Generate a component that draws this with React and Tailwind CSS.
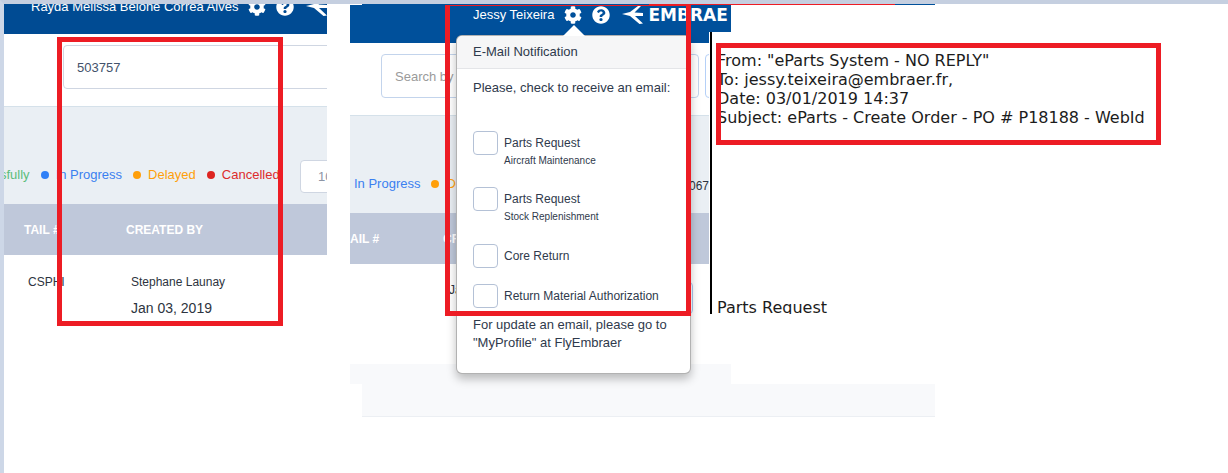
import { FaCog, FaQuestionCircle } from "react-icons/fa";

function Swoosh() {
  return (
    <svg viewBox="0 0 22 20" className="h-5 w-[22px] shrink-0" fill="currentColor" aria-hidden="true">
      <path d="M0 9 L8 7 L16 1 L19 1 L12.500 7.500 L21 8 L21 11 L13 11 L21 18.500 L17.500 19 L8 11Z" />
    </svg>
  );
}

function UserBar({ name }) {
  return (
    <div className="flex items-center text-[13px] leading-5 text-white">
      <span className="whitespace-nowrap">{name}</span>
      <button aria-label="Settings" className="ml-[10px] shrink-0"><FaCog size={18} /></button>
      <button aria-label="Help" className="ml-[10px] shrink-0"><FaQuestionCircle size={18} /></button>
      <span className="ml-3 flex items-center gap-1">
        <Swoosh />
        <span className="font-['DejaVu_Sans'] text-[17px] font-bold">EMBRAE</span>
      </span>
    </div>
  );
}

function Legend({ color, dot, children }) {
  return (
    <span className={`flex items-center gap-[7px] ${color}`}>
      {dot && <span className={`size-2 rounded-full ${dot}`} />}
      {children}
    </span>
  );
}

function OrdersPanel() {
  return (
    <section className="w-[323px] shrink-0 overflow-hidden">
      <header className="h-[30px] overflow-hidden bg-[#004b93] pl-[27px]">
        <div className="-mt-[7px]"><UserBar name="Rayda Melissa Belone Correa Alves" /></div>
      </header>
      <div className="h-[72px] pt-[11px] pl-[59px]">
        <input
          aria-label="Search"
          defaultValue="503757"
          className="h-11 w-[300px] rounded border border-[#cfd6e2] bg-white px-[13px] text-[13px] text-[#43526b]"
        />
      </div>
      <div className="flex h-[98px] items-start border-t border-[#d5e1ea] bg-[#eaeff4] pt-[53px] text-[13px]">
        <div className="-ml-1 flex h-[30px] w-[300px] shrink-0 items-center gap-[11px] whitespace-nowrap">
          <Legend color="text-[#5cbd7c]">sfully</Legend>
          <Legend color="text-[#3b7ff0]" dot="bg-[#2f80f7]">In Progress</Legend>
          <Legend color="text-[#ff9f0a]" dot="bg-[#ff9f0a]">Delayed</Legend>
          <Legend color="text-[#dd2c2c]" dot="bg-[#dd2420]">Cancelled</Legend>
        </div>
        <select aria-label="Page size" className="h-[33px] w-[60px] shrink-0 appearance-none rounded border border-[#cfd6e2] bg-white pl-[17px] text-[#8d95a5]">
          <option>10</option>
        </select>
      </div>
      <table className="w-full table-fixed text-left text-[#2d3440]">
        <thead className="h-[51px] bg-[#bfc8da] text-[12px] text-white">
          <tr><th className="w-[100px] pl-5">TAIL #</th><th className="pl-[22px]">CREATED BY</th></tr>
        </thead>
        <tbody className="align-top">
          <tr>
            <td className="pt-[17px] pl-6 text-[12px] leading-5">CSPHI</td>
            <td className="pt-[17px] pl-[27px]">
              <p className="text-[12px] leading-5">Stephane Launay</p>
              <p className="pt-[6px] text-[14px] leading-5">Jan 03, 2019</p>
            </td>
          </tr>
        </tbody>
      </table>
    </section>
  );
}

function CheckRow({ id, title, note }) {
  return (
    <div className="flex items-start gap-[6px]">
      <input
        id={id}
        type="checkbox"
        className="h-6 w-[25px] shrink-0 appearance-none rounded border border-[#b4c1d6] bg-white"
      />
      <label htmlFor={id} className="text-[12px] leading-6">
        {title}
        {note && <span className="block text-[10px] leading-3">{note}</span>}
      </label>
    </div>
  );
}

function NotificationPopover() {
  return (
    <div className="absolute top-[30px] left-[106px] z-20 h-[339px] w-[235px] rounded-md border border-black/30 bg-white text-[13px] text-[#2f3a4c] shadow-[0_5px_10px_rgba(0,0,0,0.25)]">
      <svg viewBox="0 0 22 11" className="absolute -top-[11px] left-[106px] h-[11px] w-[22px]" aria-hidden="true">
        <path d="M11 0 22 11H0Z" fill="#fff" />
      </svg>
      <h2 className="rounded-t-md border-b border-[#e4e5e8] bg-[#f6f6f7] py-[6px] pl-4 leading-5">E-Mail Notification</h2>
      <div className="flex flex-col px-4 pt-[9px]">
        <p className="whitespace-nowrap leading-5">Please, check to receive an email:</p>
        <div className="flex flex-col gap-5 pt-[33px]">
          <CheckRow id="maintenance" title="Parts Request" note="Aircraft Maintenance" />
          <CheckRow id="stock" title="Parts Request" note="Stock Replenishment" />
        </div>
        <div className="flex flex-col gap-4 pt-[21px]">
          <CheckRow id="core" title="Core Return" />
          <CheckRow id="rma" title="Return Material Authorization" />
        </div>
        <p className="whitespace-nowrap pt-2 leading-[18px]">For update an email, please go to<br />"MyProfile" at FlyEmbraer</p>
      </div>
    </div>
  );
}

function NotificationPanel() {
  return (
    <section className="relative mt-px ml-[23px] w-[381px] shrink-0">
      <header className="flex h-[38px] items-start overflow-hidden bg-[#00509b] pl-[123px]">
        <UserBar name="Jessy Teixeira" />
      </header>
      <div className="flex h-[72px] gap-[6px] overflow-hidden pt-[11px] pl-[31px]">
        <input
          aria-label="Search orders"
          placeholder="Search by"
          className="h-11 w-[318px] shrink-0 rounded border border-[#c3d4ec] bg-white px-[13px] text-[13px] placeholder:text-[#9a9a9a]"
        />
        <input aria-label="Filter" className="h-11 w-20 shrink-0 rounded border border-[#b5d0f7] bg-white" />
      </div>
      <div className="flex h-[98px] items-start justify-between border-t border-[#d5e1ea] bg-[#eaeff4] pr-[22px] pl-1 pt-[58px] text-[13px] leading-5">
        <div className="flex gap-[11px]">
          <Legend color="text-[#3b7ff0]">In Progress</Legend>
          <Legend color="text-[#ff9f0a]" dot="bg-[#ff9f0a]">Delayed</Legend>
        </div>
        <span className="pt-[2px] text-[12px] text-[#2d3440]">067</span>
      </div>
      <table className="w-full table-fixed text-left text-[12px] text-[#2d3440]">
        <thead className="h-[51px] bg-[#bfc8da] text-white">
          <tr><th className="w-[93px]">AIL #</th><th>CREATED BY</th></tr>
        </thead>
        <tbody className="h-[100px] align-top">
          <tr>
            <td />
            <td className="pl-[6px]">
              <div className="flex items-start justify-between pt-[18px] pr-[38px]">
                <span className="leading-4">Ja</span>
                <span className="h-8 w-12 rounded border border-[#a9c6ee]" />
              </div>
            </td>
          </tr>
        </tbody>
      </table>
      <div className="h-5 bg-[#f8f9fb]" />
      <NotificationPopover />
      <div className="absolute top-0 left-[95px] z-30 h-[311px] w-[246px] border-5 border-t border-[#ed1c24]" />
    </section>
  );
}

function EmailPanel() {
  return (
    <section className="z-10 mt-7 -ml-[22px] h-[282px] min-w-0 flex-1 overflow-hidden bg-white pl-px font-['DejaVu_Sans',sans-serif] text-[16px] leading-[19px] text-[#1c1c1c]">
      <div className="relative h-full border-l-2 border-black pt-[19px] pl-[5px] whitespace-nowrap">
        <p>From: "eParts System - NO REPLY"</p>
        <p>To: jessy.teixeira@embraer.fr,</p>
        <p>Date: 03/01/2019 14:37</p>
        <p>Subject: eParts - Create Order - PO # P18188 - WebId</p>
        <p className="pt-[171px]">Parts Request</p>
        <div className="absolute top-[11px] left-1 h-[102px] w-[445px] border-5 border-[#ed1c24]" />
      </div>
    </section>
  );
}

export default function App() {
  return (
    <main className="relative min-h-screen overflow-hidden border-t-4 border-l-4 border-t-[#c5cfe0] border-l-[#cdd7e7] bg-white font-['Liberation_Sans',Arial,sans-serif]">
      <div className="flex items-start">
        <OrdersPanel />
        <NotificationPanel />
        <EmailPanel />
      </div>
      <div className="ml-[358px] h-[33px] max-w-[573px] border-b border-[#eceff3] bg-[#f8f9fb]" />
      <div className="absolute top-0 left-[358px] flex h-px w-[573px] bg-[#00509b] pl-[287px]">
        <span className="w-[246px] bg-[#ed1c24]" />
      </div>
      <div className="absolute top-[33px] left-[53px] h-[289px] w-[226px] border-5 border-[#ed1c24]" />
    </main>
  );
}
